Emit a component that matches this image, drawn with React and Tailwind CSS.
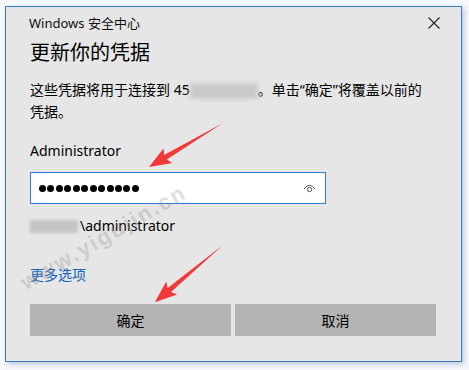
import React from "react";

const font = { fontFamily: '"Noto Sans", "Noto Sans CJK SC", sans-serif' };

function Arrow({ x, y, angle, len }) {
  const L = len;
  const pts = `0,0 ${L - 19},-2.6 ${L - 22},-8.5 ${L},0 ${L - 22},8.5 ${L - 19},2.6`;
  return (
    <polygon
      points={pts}
      fill="#f03a3a"
      transform={`translate(${x} ${y}) rotate(${angle})`}
    />
  );
}

export default function App() {
  return (
    <div className="relative w-[469px] h-[370px] bg-[#f6f8fb] overflow-hidden" style={font}>
      <div className="pl-[5px] pt-[6px]">
        <div className="w-[457px] h-[356px] border border-[#3a7cc2] bg-[#e6e6e6] shadow-[2px_2px_5px_rgba(60,110,170,0.35)] flex flex-col">
          <div className="h-[32px] flex items-center justify-between pl-[23px] pr-[21px]">
            <span className="text-[13px] leading-none text-[#111]">Windows 安全中心</span>
            <svg width="12" height="12" viewBox="0 0 12 12">
              <path d="M0.5 0.5 L11.5 11.5 M11.5 0.5 L0.5 11.5" stroke="#222" strokeWidth="1.1" />
            </svg>
          </div>
          <div className="pl-[24px] pr-[25px] flex flex-col">
            <div className="text-[20px] leading-[28px] text-black">更新你的凭据</div>
            <div className="mt-[12px] text-[14px] leading-[22px] text-black">
              这些凭据将用于连接到 45
              <span className="inline-block align-middle w-[68px] h-[16px] bg-[#c9c9c9] blur-[2px]"></span>
              。单击“确定”将覆盖以前的
              <br />
              凭据。
            </div>
            <div className="mt-[18px] text-[14px] leading-[20px] text-black">Administrator</div>
            <div className="mt-[11px] w-[296px] h-[32px] bg-white border border-[#2f7bcf] flex items-center justify-between pl-[8px] pr-[9px]">
              <div className="flex gap-[1.45px]">
                {Array.from({ length: 12 }).map((_, i) => (
                  <div key={i} className="w-[7px] h-[7px] rounded-full bg-black" />
                ))}
              </div>
              <svg width="13" height="10" viewBox="0 0 13 10">
                <path d="M1 6 Q6.5 -1.5 12 6" fill="none" stroke="#555" strokeWidth="1" />
                <circle cx="6.5" cy="6.5" r="2.2" fill="none" stroke="#555" strokeWidth="1" />
              </svg>
            </div>
            <div className="mt-[12px] text-[14px] leading-[20px] text-black flex items-center">
              <span className="inline-block w-[48px] h-[13px] bg-[#c4c4c4] blur-[1.5px]"></span>
              <span className="ml-[2px]">\administrator</span>
            </div>
            <div className="mt-[29px] text-[14px] leading-[20px] text-[#1565b8]">更多选项</div>
            <div className="mt-[19px] grid grid-cols-2 gap-[4px]">
              <div className="h-[32px] bg-[#b4b4b4] flex items-center justify-center text-[14px] text-black">确定</div>
              <div className="h-[32px] bg-[#b4b4b4] flex items-center justify-center text-[14px] text-black">取消</div>
            </div>
          </div>
        </div>
      </div>

      <div
        className="absolute left-[28px] top-[272px] origin-bottom-left text-[22px] leading-[22px] font-bold tracking-[2px] text-[rgba(140,140,140,0.3)] whitespace-nowrap pointer-events-none"
        style={{ transform: "rotate(-30deg)", fontFamily: '"Liberation Sans", sans-serif' }}
      >
        www.yigujin.cn
      </div>

      <svg className="absolute left-0 top-0 pointer-events-none" width="469" height="370">
        <Arrow x={223} y={123} angle={149.3} len={86} />
        <Arrow x={223} y={245} angle={140} len={89} />
      </svg>
    </div>
  );
}
